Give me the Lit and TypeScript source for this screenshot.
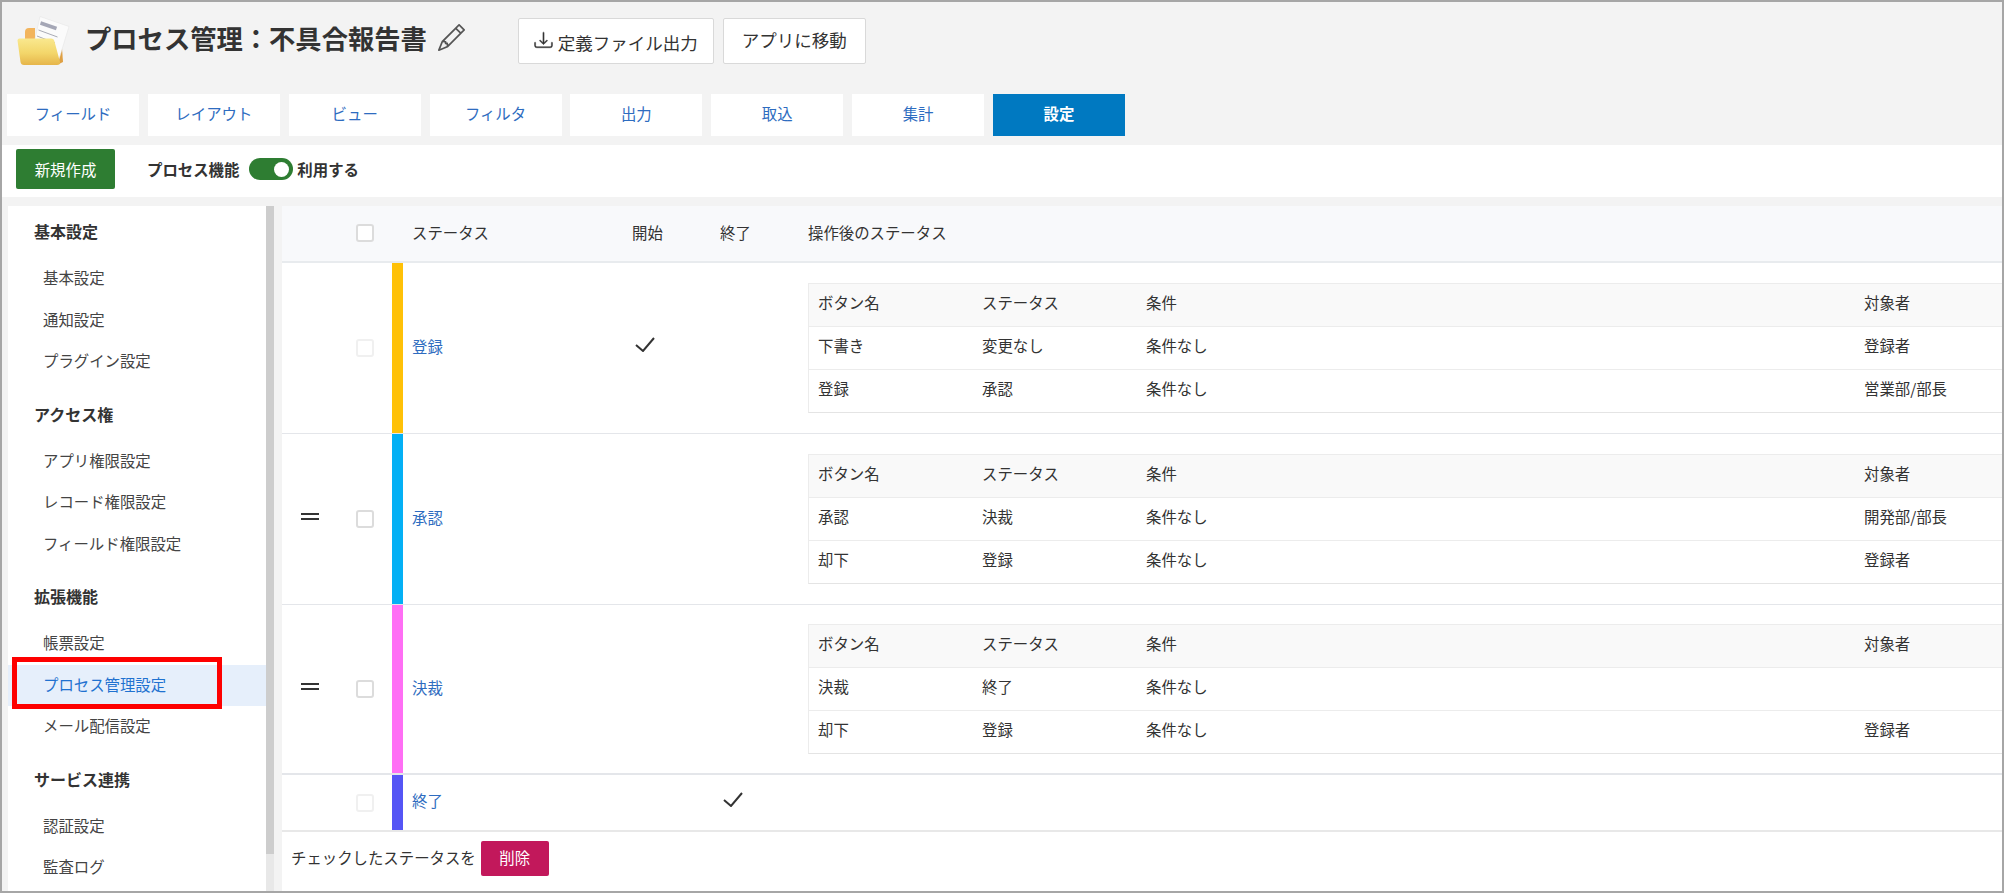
import { LitElement, html, css, nothing } from 'lit';
import { customElement } from 'lit/decorators.js';

const TABS = ['フィールド', 'レイアウト', 'ビュー', 'フィルタ', '出力', '取込', '集計', '設定'];

const NAV = [
  { title: '基本設定', items: ['基本設定', '通知設定', 'プラグイン設定'] },
  { title: 'アクセス権', items: ['アプリ権限設定', 'レコード権限設定', 'フィールド権限設定'] },
  { title: '拡張機能', items: ['帳票設定', 'プロセス管理設定', 'メール配信設定'] },
  { title: 'サービス連携', items: ['認証設定', '監査ログ'] },
];

const ROWS = [
  {
    name: '登録',
    color: '#ffc107',
    locked: true,
    start: true,
    end: false,
    actions: [
      ['下書き', '変更なし', '条件なし', '登録者'],
      ['登録', '承認', '条件なし', '営業部/部長'],
    ],
  },
  {
    name: '承認',
    color: '#03b0f5',
    locked: false,
    start: false,
    end: false,
    actions: [
      ['承認', '決裁', '条件なし', '開発部/部長'],
      ['却下', '登録', '条件なし', '登録者'],
    ],
  },
  {
    name: '決裁',
    color: '#ff6ef5',
    locked: false,
    start: false,
    end: false,
    actions: [
      ['決裁', '終了', '条件なし', ''],
      ['却下', '登録', '条件なし', '登録者'],
    ],
  },
  { name: '終了', color: '#5555f5', locked: true, start: false, end: true, actions: [] },
];

@customElement('app-root')
export class AppRoot extends LitElement {
  static styles = css`
    :host {
      display: flex;
      flex-direction: column;
      box-sizing: border-box;
      height: 893px;
      border: 2px solid #a6a6a6;
      overflow: hidden;
      background: #f3f3f3;
      color: #333;
      font-family: 'Noto Sans CJK JP', 'Noto Sans', sans-serif;
      font-size: 15.4px;
    }

    .head {
      display: flex;
      height: 92px;
      box-sizing: border-box;
      padding: 13px 0 0 15px;
      align-items: flex-start;
    }

    .folder {
      width: 53px;
      height: 52px;
      flex: none;
    }

    .title {
      margin: 4px 0 0 15px;
      font-size: 26.3px;
      font-weight: 700;
      line-height: 38px;
      color: #333;
      white-space: nowrap;
    }

    .pencil {
      width: 27px;
      height: 27px;
      margin: 9px 0 0 11px;
      flex: none;
      color: #555;
    }

    .btn {
      display: flex;
      align-items: center;
      justify-content: center;
      box-sizing: border-box;
      height: 46px;
      margin-top: 3px;
      background: #fff;
      border: 1px solid #d9d9d9;
      border-radius: 2px;
      font-size: 17.5px;
      color: #333;
    }

    .btn.export {
      width: 196px;
      margin-left: 53px;
      gap: 5px;
      padding-top: 3px;
    }

    .btn.export svg {
      width: 19px;
      height: 18px;
      margin-top: -5px;
    }

    .btn.move {
      width: 143px;
      margin-left: 9px;
      padding-bottom: 4px;
    }

    .tabs {
      display: flex;
      gap: 8.85px;
      height: 42px;
      padding-left: 5px;
      margin-bottom: 9px;
    }

    .tab {
      display: flex;
      align-items: center;
      justify-content: center;
      box-sizing: border-box;
      width: 132px;
      padding-bottom: 5px;
      background: #fff;
      color: #2e6cc0;
    }

    .tab.active {
      background: #0079c1;
      color: #fff;
      font-weight: 700;
    }

    .toolbar {
      display: flex;
      align-items: center;
      height: 52px;
      padding-left: 14px;
      background: #fff;
    }

    .create {
      display: flex;
      align-items: center;
      justify-content: center;
      width: 99px;
      height: 40px;
      margin-top: -4px;
      background: #2e7d32;
      border-radius: 2px;
      color: #fff;
    }

    .feature {
      display: flex;
      align-items: center;
      margin: -4px 0 0 32px;
      font-weight: 700;
    }

    .toggle {
      display: flex;
      align-items: center;
      justify-content: flex-end;
      box-sizing: border-box;
      width: 44px;
      height: 22px;
      margin: 0 4px 0 10px;
      padding-right: 4px;
      background: #2e7d32;
      border-radius: 11px;
    }

    .toggle i {
      display: block;
      width: 15px;
      height: 15px;
      background: #fff;
      border-radius: 50%;
    }

    .body {
      flex: 1;
      display: flex;
      gap: 8px;
      min-height: 0;
      padding: 9px 0 0 6px;
    }

    .side {
      display: flex;
      flex: none;
      width: 266px;
      overflow: hidden;
      background: #fff;
    }

    .nav {
      flex: 1;
      min-width: 0;
    }

    .scroll {
      flex: none;
      width: 8px;
      background: #e8e8e8;
    }

    .scroll i {
      display: block;
      height: 648px;
      background: #cdcdcd;
    }

    .group + .group {
      margin-top: 6px;
    }

    .group h3 {
      display: flex;
      align-items: center;
      box-sizing: border-box;
      height: 52px;
      margin: 0;
      padding: 0 0 2px 26px;
      font-size: 16px;
      font-weight: 700;
      color: #333;
    }

    .item {
      position: relative;
      display: flex;
      align-items: center;
      box-sizing: border-box;
      height: 41.5px;
      padding: 0 0 3px 35px;
      color: #444;
    }

    .item.current {
      background: #e6effb;
      color: #1f72d0;
    }

    .marker {
      position: absolute;
      top: -8px;
      left: 4px;
      box-sizing: border-box;
      width: 210px;
      height: 52px;
      border: 5px solid #fe0000;
    }

    .main {
      flex: 1;
      min-width: 0;
      background: #fff;
    }

    .line {
      display: grid;
      grid-template-columns: 56px 54px 11px 229px 88px 88px 1fr;
      align-items: center;
    }

    .line.top {
      height: 55px;
      padding-bottom: 0;
      background: #f8f9fb;
      border-bottom: 2px solid #e8ebee;
    }

    .line.top > div {
      padding-bottom: 3px;
    }

    .line.top > .box {
      padding-bottom: 0;
      margin-top: -2px;
    }

    .line.step {
      height: 170px;
      border-bottom: 1px solid #e4e6ea;
    }

    .line.step.tail {
      height: 168px;
      border-bottom-width: 2px;
    }

    .line.last {
      height: 55px;
      border-bottom: 2px solid #e8e8e8;
    }

    .grip {
      justify-self: center;
      width: 18px;
      height: 3px;
      border-top: 2px solid #333;
      border-bottom: 2px solid #333;
      margin-top: -6px;
    }

    .box {
      grid-column: 2;
      justify-self: center;
      box-sizing: border-box;
      width: 18px;
      height: 18px;
      background: #fff;
      border: 2px solid #dcdcdc;
      border-radius: 3px;
    }

    .box.off {
      border-color: #f0f0f0;
    }

    .bar {
      align-self: stretch;
    }

    .name {
      padding-left: 9px;
    }

    .line.step .name,
    .line.last .name {
      padding-bottom: 5px;
    }

    .link {
      color: #2e6cc0;
    }

    .tick {
      display: block;
      width: 20px;
      height: 15px;
      margin: -7px 0 0 3px;
      color: #333;
    }

    .actions {
      margin-top: -1px;
      border-top: 1px solid #ececec;
      border-left: 1px solid #ececec;
      border-bottom: 1px solid #e4e4e4;
    }

    .action {
      display: grid;
      grid-template-columns: 164px 164px 718px 1fr;
      align-items: center;
      height: 42px;
      border-top: 1px solid #ececec;
    }

    .action.label {
      height: 42px;
      border-top: 0;
      background: #f9f9f9;
    }

    .action span {
      padding: 0 0 5px 9px;
    }

    .foot {
      display: flex;
      align-items: center;
      gap: 5px;
      padding: 9px 0 0 9px;
    }

    .foot > span {
      padding-bottom: 3px;
    }

    .del {
      display: flex;
      align-items: center;
      justify-content: center;
      box-sizing: border-box;
      width: 68px;
      height: 35px;
      padding-bottom: 3px;
      background: #c2185b;
      border-radius: 2px;
      color: #fff;
    }
  `;

  folder() {
    return html`<svg class="folder" viewBox="7 5 53 52">
      <defs>
        <linearGradient id="front" x1="0" y1="0" x2="0" y2="1">
          <stop offset="0" stop-color="#f9e88f" />
          <stop offset="0.55" stop-color="#f3d66a" />
          <stop offset="1" stop-color="#e6b54a" />
        </linearGradient>
      </defs>
      <path d="M15 22q0-4 4-4h6v20H15z" fill="#f2b45c" />
      <path d="M49 40l3-2 1 14-4 2z" fill="#dfa043" />
      <path d="M30 6.5l29 10-11 36-26-10z" fill="#fbfbfb" stroke="#e3e3e3" stroke-width=".5" />
      <path d="M30.5 13l16 5.500" stroke="#a5a7b6" stroke-width="3.500" />
      <path d="M28.500 20l19 7M27 26l18 7M43 38l3 1" stroke="#a9abb5" stroke-width="1" />
      <path
        d="M7.500 30.500q0-2 2-2h31.500q3 0 3.500 3l5.500 20.500q.5 3-3 3h-33q-3 0-3.500-3z"
        fill="url(#front)"
      />
    </svg>`;
  }

  pencil() {
    return html`<svg class="pencil" viewBox="0 0 16 16" fill="currentColor">
      <path
        d="M12.146.146a.5.5 0 0 1 .708 0l3 3a.5.5 0 0 1 0 .708l-10 10a.5.5 0 0 1-.168.11l-5 2a.5.5 0 0 1-.65-.65l2-5a.5.5 0 0 1 .11-.168l10-10zM11.207 2.500 13.500 4.793 14.793 3.500 12.500 1.207 11.207 2.500zm1.586 3L10.500 3.207 4 9.707V10h.5a.5.5 0 0 1 .5.5v.5h.5a.5.5 0 0 1 .5.5v.5h.293l6.500-6.500zm-9.761 5.175-.106.106-1.528 3.821 3.821-1.528.106-.106A.5.5 0 0 1 5 12.500V12h-.5a.5.5 0 0 1-.5-.5V11h-.5a.5.5 0 0 1-.468-.325z"
      />
    </svg>`;
  }

  download() {
    return html`<svg viewBox="0 0 16 16" fill="#333" stroke="#333" stroke-width=".4">
      <path
        d="M.5 9.900a.5.5 0 0 1 .5.5v2.500a1 1 0 0 0 1 1h12a1 1 0 0 0 1-1v-2.500a.5.5 0 0 1 1 0v2.500a2 2 0 0 1-2 2H2a2 2 0 0 1-2-2v-2.500a.5.5 0 0 1 .5-.5z"
      />
      <path
        d="M7.646 11.854a.5.5 0 0 0 .708 0l3-3a.5.5 0 0 0-.708-.708L8.500 10.293V1.500a.5.5 0 0 0-1 0v8.793L5.354 8.146a.5.5 0 1 0-.708.708l3 3z"
      />
    </svg>`;
  }

  tick() {
    return html`<svg class="tick" viewBox="0 0 20 15" fill="none">
      <path d="M1 8l7 6L19 1" stroke="currentColor" stroke-width="2" />
    </svg>`;
  }

  renderActions(actions: string[][]) {
    return html`<div class="actions">
      <div class="action label">
        <span>ボタン名</span><span>ステータス</span><span>条件</span><span>対象者</span>
      </div>
      ${actions.map(
        (a) => html`<div class="action">${a.map((cell) => html`<span>${cell}</span>`)}</div>`
      )}
    </div>`;
  }

  renderRow(row: (typeof ROWS)[number], i: number) {
    const last = row.actions.length === 0;
    const cls = last ? 'line last' : i === 2 ? 'line step tail' : 'line step';
    return html`<div class=${cls}>
      ${row.locked ? html`<div></div>` : html`<div class="grip"></div>`}
      <div class="box ${row.locked ? 'off' : ''}"></div>
      <div class="bar" style="background:${row.color}"></div>
      <div class="name link">${row.name}</div>
      <div>${row.start ? this.tick() : nothing}</div>
      <div>${row.end ? this.tick() : nothing}</div>
      <div>${last ? nothing : this.renderActions(row.actions)}</div>
    </div>`;
  }

  render() {
    return html`
      <div class="head">
        ${this.folder()}
        <div class="title">プロセス管理：不具合報告書</div>
        ${this.pencil()}
        <div class="btn export">${this.download()}定義ファイル出力</div>
        <div class="btn move">アプリに移動</div>
      </div>
      <div class="tabs">
        ${TABS.map(
          (t, i) => html`<div class="tab ${i === TABS.length - 1 ? 'active' : ''}">${t}</div>`
        )}
      </div>
      <div class="toolbar">
        <div class="create">新規作成</div>
        <div class="feature">
          プロセス機能
          <div class="toggle"><i></i></div>
          利用する
        </div>
      </div>
      <div class="body">
        <div class="side">
          <div class="nav">
            ${NAV.map(
              (g) => html`<div class="group">
                <h3>${g.title}</h3>
                ${g.items.map((item) =>
                  item === 'プロセス管理設定'
                    ? html`<div class="item current">${item}<div class="marker"></div></div>`
                    : html`<div class="item">${item}</div>`
                )}
              </div>`
            )}
          </div>
          <div class="scroll"><i></i></div>
        </div>
        <div class="main">
          <div class="line top">
            <div></div>
            <div class="box"></div>
            <div></div>
            <div class="name">ステータス</div>
            <div>開始</div>
            <div>終了</div>
            <div>操作後のステータス</div>
          </div>
          ${ROWS.map((r, i) => this.renderRow(r, i))}
          <div class="foot"><span>チェックしたステータスを</span><div class="del">削除</div></div>
        </div>
      </div>
    `;
  }
}
